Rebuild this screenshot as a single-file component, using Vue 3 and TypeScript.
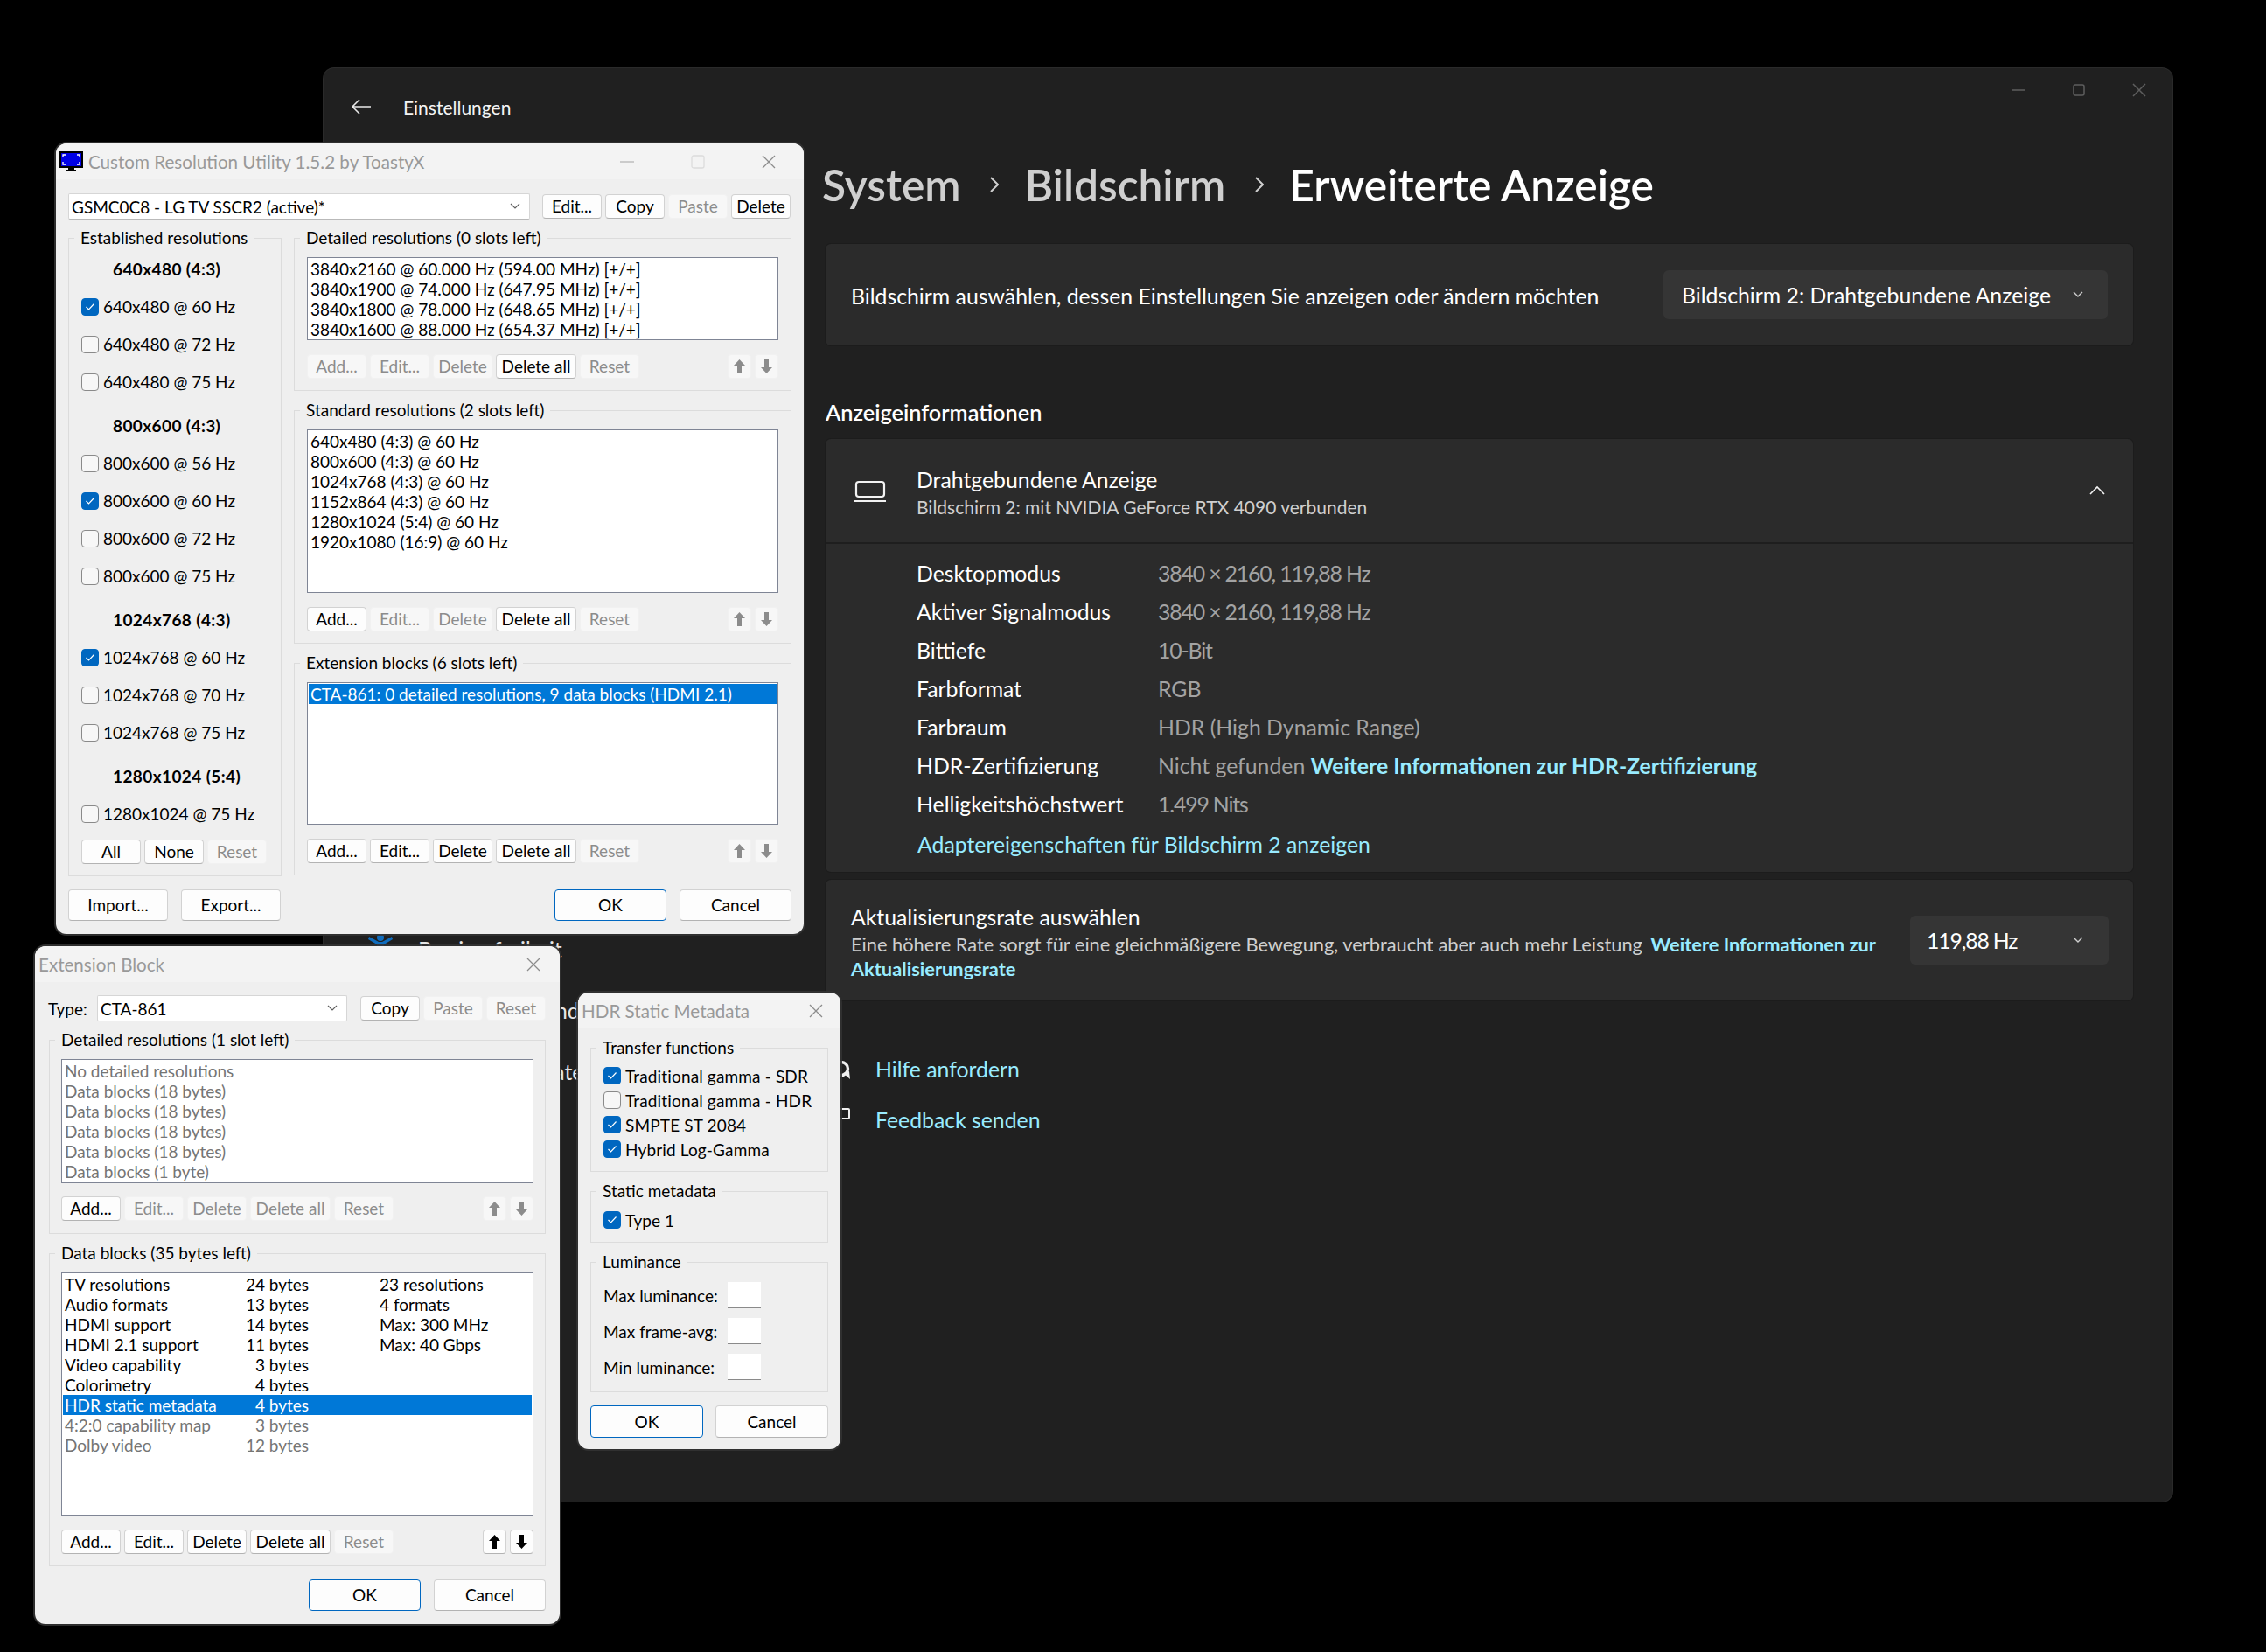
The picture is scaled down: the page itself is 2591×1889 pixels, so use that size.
<script setup lang="ts">
interface Btn { t: string; off?: boolean; wide?: boolean }

const crud = (add: boolean, edit: boolean, del: boolean, all: boolean): Btn[] => [
  { t: 'Add...', off: !add },
  { t: 'Edit...', off: !edit },
  { t: 'Delete', off: !del },
  { t: 'Delete all', off: !all, wide: true },
  { t: 'Reset', off: true },
]

const established = [
  { h: '640x480 (4:3)', items: [['640x480 @ 60 Hz', true], ['640x480 @ 72 Hz', false], ['640x480 @ 75 Hz', false]] },
  { h: '800x600 (4:3)', items: [['800x600 @ 56 Hz', false], ['800x600 @ 60 Hz', true], ['800x600 @ 72 Hz', false], ['800x600 @ 75 Hz', false]] },
  { h: '1024x768 (4:3)', items: [['1024x768 @ 60 Hz', true], ['1024x768 @ 70 Hz', false], ['1024x768 @ 75 Hz', false]] },
  { h: '1280x1024 (5:4)', items: [['1280x1024 @ 75 Hz', false]] },
] as { h: string; items: [string, boolean][] }[]

const cruGroups = [
  {
    legend: 'Detailed resolutions (0 slots left)', cls: 'h95', sel: false,
    lines: ['3840x2160 @ 60.000 Hz (594.00 MHz) [+/+]', '3840x1900 @ 74.000 Hz (647.95 MHz) [+/+]', '3840x1800 @ 78.000 Hz (648.65 MHz) [+/+]', '3840x1600 @ 88.000 Hz (654.37 MHz) [+/+]'],
    btns: crud(false, false, false, true),
  },
  {
    legend: 'Standard resolutions (2 slots left)', cls: 'h187', sel: false,
    lines: ['640x480 (4:3) @ 60 Hz', '800x600 (4:3) @ 60 Hz', '1024x768 (4:3) @ 60 Hz', '1152x864 (4:3) @ 60 Hz', '1280x1024 (5:4) @ 60 Hz', '1920x1080 (16:9) @ 60 Hz'],
    btns: crud(true, false, false, true),
  },
  {
    legend: 'Extension blocks (6 slots left)', cls: 'h163', sel: true,
    lines: ['CTA-861: 0 detailed resolutions, 9 data blocks (HDMI 2.1)'],
    btns: crud(true, true, true, true),
  },
]

const detailLines = ['No detailed resolutions', 'Data blocks (18 bytes)', 'Data blocks (18 bytes)', 'Data blocks (18 bytes)', 'Data blocks (18 bytes)', 'Data blocks (1 byte)']
const dataBlocks = [
  ['TV resolutions', '24 bytes', '23 resolutions', ''],
  ['Audio formats', '13 bytes', '4 formats', ''],
  ['HDMI support', '14 bytes', 'Max: 300 MHz', ''],
  ['HDMI 2.1 support', '11 bytes', 'Max: 40 Gbps', ''],
  ['Video capability', '3 bytes', '', ''],
  ['Colorimetry', '4 bytes', '', ''],
  ['HDR static metadata', '4 bytes', '', 'sel'],
  ['4:2:0 capability map', '3 bytes', '', 'dim'],
  ['Dolby video', '12 bytes', '', 'dim'],
]
const transfer: [string, boolean][] = [['Traditional gamma - SDR', true], ['Traditional gamma - HDR', false], ['SMPTE ST 2084', true], ['Hybrid Log-Gamma', true]]
const lumi = ['Max luminance:', 'Max frame-avg:', 'Min luminance:']
const infoRows = [
  ['Desktopmodus', '3840 × 2160, 119,88 Hz', 'nums'],
  ['Aktiver Signalmodus', '3840 × 2160, 119,88 Hz', 'nums'],
  ['Bittiefe', '10-Bit', 'nums'],
  ['Farbformat', 'RGB', ''],
  ['Farbraum', 'HDR (High Dynamic Range)', ''],
]
</script>

<template>
  <div class="desk">
    <!-- Settings window -->
    <section class="settings">
      <div class="caption-btns">
        <svg width="20" height="20" viewBox="0 0 20 20"><path d="M3 10h14" stroke="#5e5e5e" stroke-width="1.5" /></svg>
        <svg width="20" height="20" viewBox="0 0 20 20"><rect x="4" y="4" width="12" height="12" rx="2" fill="none" stroke="#5e5e5e" stroke-width="1.5" /></svg>
        <svg width="20" height="20" viewBox="0 0 20 20"><path d="M3 3l14 14M17 3L3 17" stroke="#5e5e5e" stroke-width="1.5" /></svg>
      </div>
      <header class="s-title">
        <svg class="back" width="24" height="24" viewBox="0 0 24 24"><path d="M23 12H2M10 4l-8 8 8 8" fill="none" stroke="#e8e8e8" stroke-width="1.6" /></svg>
        <span>Einstellungen</span>
      </header>
      <div class="s-body">
        <nav class="s-side">
          <div class="nav-item">
            <svg class="nav-ic" width="32" height="34" viewBox="0 0 32 34"><circle cx="16" cy="4" r="4" fill="#0f6cbd" /><path d="M2 6l10 6v8l-4 12h4l4-10 4 10h4l-4-12v-8l10-6-1-3-11 6h-4L3 3z" fill="#0f6cbd" /></svg>
            <span>Barrierefreiheit</span>
          </div>
          <div class="nav-item"><span class="nav-ic" /><span>Datenschutz und Sicherheit</span></div>
          <div class="nav-item"><span class="nav-ic" /><span>Windows Update</span></div>
        </nav>
        <main class="s-main">
          <h1 class="crumbs">
            <span class="c-dim">System</span>
            <svg width="14" height="24" viewBox="0 0 14 24"><path d="M5 4l8 8-8 8" fill="none" stroke="#cfcfcf" stroke-width="2" /></svg>
            <span class="c-dim">Bildschirm</span>
            <svg width="14" height="24" viewBox="0 0 14 24"><path d="M5 4l8 8-8 8" fill="none" stroke="#cfcfcf" stroke-width="2" /></svg>
            <span>Erweiterte Anzeige</span>
          </h1>

          <div class="card pick">
            <span class="pick-t">Bildschirm auswählen, dessen Einstellungen Sie anzeigen oder ändern möchten</span>
            <div class="dd dd-wide">
              <span>Bildschirm 2: Drahtgebundene Anzeige</span>
              <svg width="14" height="10" viewBox="0 0 14 10"><path d="M2 2l5 5 5-5" fill="none" stroke="#cfcfcf" stroke-width="1.4" /></svg>
            </div>
          </div>

          <h2 class="sect">Anzeigeinformationen</h2>

          <div class="card info">
            <div class="info-head">
              <svg class="lap" width="36" height="26" viewBox="0 0 36 26"><rect x="2" y="3" width="32" height="17" rx="3" fill="none" stroke="#f2f2f2" stroke-width="2.2" /><path d="M0 25h36" stroke="#f2f2f2" stroke-width="2.2" /></svg>
              <div class="info-t">
                <div class="t1">Drahtgebundene Anzeige</div>
                <div class="t2">Bildschirm 2: mit NVIDIA GeForce RTX 4090 verbunden</div>
              </div>
              <svg class="up" width="20" height="12" viewBox="0 0 20 12"><path d="M2 10l8-8 8 8" fill="none" stroke="#f2f2f2" stroke-width="1.6" /></svg>
            </div>
            <div class="info-body">
              <div v-for="r in infoRows" :key="r[0]" class="irow"><span>{{ r[0] }}</span><span class="val" :class="r[2]">{{ r[1] }}</span></div>
              <div class="irow"><span>HDR-Zertifizierung</span><span class="val">Nicht gefunden <a class="lnk b">Weitere Informationen zur HDR-Zertifizierung</a></span></div>
              <div class="irow"><span>Helligkeitshöchstwert</span><span class="val nums">1.499 Nits</span></div>
              <a class="lnk adapter">Adaptereigenschaften für Bildschirm 2 anzeigen</a>
            </div>
          </div>

          <div class="card rate">
            <div class="rate-t">
              <div class="t1">Aktualisierungsrate auswählen</div>
              <div class="t2 wrap">Eine höhere Rate sorgt für eine gleichmäßigere Bewegung, verbraucht aber auch mehr Leistung <a class="lnk b gap">Weitere Informationen zur</a><br /><a class="lnk b">Aktualisierungsrate</a></div>
            </div>
            <div class="dd dd-narrow">
              <span class="nums">119,88 Hz</span>
              <svg width="14" height="10" viewBox="0 0 14 10"><path d="M2 2l5 5 5-5" fill="none" stroke="#cfcfcf" stroke-width="1.4" /></svg>
            </div>
          </div>

          <div class="help">
            <div class="help-row">
              <svg class="help-ic" width="28" height="28" viewBox="0 0 28 28"><circle cx="18" cy="13" r="7.5" fill="none" stroke="#f0f0f0" stroke-width="3.4" /><path d="M20 18l8 7-1-9z" fill="#f0f0f0" /></svg>
              <a class="lnk">Hilfe anfordern</a>
            </div>
            <div class="help-row">
              <svg class="help-ic feedback" width="28" height="28" viewBox="0 0 28 28"><rect x="9" y="1" width="18" height="11" rx="1" fill="none" stroke="#f0f0f0" stroke-width="2" /></svg>
              <a class="lnk">Feedback senden</a>
            </div>
          </div>
        </main>
      </div>
    </section>

    <!-- CRU main window -->
    <section class="win cru">
      <header class="w-title">
        <svg class="cru-ic" width="27" height="23" viewBox="0 0 27 23">
          <rect x="0" y="0" width="27" height="19" fill="#000" />
          <rect x="2" y="2" width="23" height="15" fill="#0000e6" />
          <path d="M4 7V4h3M20 4h3v3M4 12v3h3M20 15h3v-3" fill="none" stroke="#fff" stroke-width="1.3" />
          <rect x="10" y="19" width="7" height="2" fill="#000" /><rect x="8" y="21" width="11" height="2" fill="#000" />
        </svg>
        <span class="w-name">Custom Resolution Utility 1.5.2 by ToastyX</span>
        <div class="w-ctl cru-ctl">
          <svg width="16" height="16" viewBox="0 0 16 16"><path d="M0 8h16" stroke="#b5b5b5" stroke-width="1.3" /></svg>
          <svg width="16" height="16" viewBox="0 0 16 16"><rect x="1" y="1" width="14" height="14" rx="2" fill="none" stroke="#dcdcdc" stroke-width="1.3" /></svg>
          <svg width="16" height="16" viewBox="0 0 16 16"><path d="M1 1l14 14M15 1L1 15" stroke="#8c8c8c" stroke-width="1.3" /></svg>
        </div>
      </header>
      <div class="w-body">
        <div class="toprow">
          <div class="combo cru-combo">
            <span>GSMC0C8 - LG TV SSCR2 (active)*</span>
            <svg width="12" height="8" viewBox="0 0 12 8"><path d="M1 1l5 5 5-5" fill="none" stroke="#606060" stroke-width="1.2" /></svg>
          </div>
          <button class="btn">Edit...</button>
          <button class="btn">Copy</button>
          <button class="btn off">Paste</button>
          <button class="btn">Delete</button>
        </div>
        <div class="cru-grid">
          <fieldset class="grp est">
            <legend>Established resolutions</legend>
            <template v-for="g in established" :key="g.h">
              <div class="est-h">{{ g.h }}</div>
              <label v-for="it in g.items" :key="it[0]" class="chk tall">
                <span class="box" :class="{ on: it[1] }"><svg v-if="it[1]" width="12" height="10" viewBox="0 0 12 10"><path d="M1.5 5l3 3 6-6.5" fill="none" stroke="#fff" stroke-width="1.2" /></svg></span>
                <span>{{ it[0] }}</span>
              </label>
            </template>
            <div class="est-btns">
              <button class="btn">All</button>
              <button class="btn">None</button>
              <button class="btn off">Reset</button>
            </div>
          </fieldset>
          <div class="cru-right">
            <fieldset v-for="g in cruGroups" :key="g.legend" class="grp">
              <legend>{{ g.legend }}</legend>
              <div class="list" :class="g.cls">
                <div v-for="l in g.lines" :key="l" class="li" :class="{ sel: g.sel }">{{ l }}</div>
              </div>
              <div class="btnrow m16">
                <button v-for="b in g.btns" :key="b.t" class="btn" :class="{ off: b.off, wide: b.wide }">{{ b.t }}</button>
                <span class="fill" />
                <button class="btn arrow off"><svg width="13" height="16" viewBox="0 0 13 16"><path d="M6.5 0L13 7H9v9H4V7H0z" fill="#8c8c8c" /></svg></button>
                <button class="btn arrow off"><svg width="13" height="16" viewBox="0 0 13 16"><path d="M6.5 16L13 9H9V0H4v9H0z" fill="#8c8c8c" /></svg></button>
              </div>
            </fieldset>
          </div>
        </div>
        <div class="foot">
          <button class="btn big imp">Import...</button>
          <button class="btn big imp">Export...</button>
          <span class="fill" />
          <button class="btn big prim">OK</button>
          <button class="btn big">Cancel</button>
        </div>
      </div>
    </section>

    <!-- Extension Block -->
    <section class="win ext">
      <header class="w-title">
        <span class="w-name ext-name">Extension Block</span>
        <div class="w-ctl">
          <svg width="16" height="16" viewBox="0 0 16 16"><path d="M1 1l14 14M15 1L1 15" stroke="#8c8c8c" stroke-width="1.3" /></svg>
        </div>
      </header>
      <div class="w-body ext-body">
        <div class="toprow ext-top">
          <span class="type-l">Type:</span>
          <div class="combo ext-combo">
            <span>CTA-861</span>
            <svg width="12" height="8" viewBox="0 0 12 8"><path d="M1 1l5 5 5-5" fill="none" stroke="#606060" stroke-width="1.2" /></svg>
          </div>
          <button class="btn copy-gap">Copy</button>
          <button class="btn off">Paste</button>
          <button class="btn off">Reset</button>
        </div>
        <fieldset class="grp tight">
          <legend>Detailed resolutions (1 slot left)</legend>
          <div class="list h142">
            <div v-for="(l, i) in detailLines" :key="i" class="li dim">{{ l }}</div>
          </div>
          <div class="btnrow">
            <button v-for="b in crud(true, false, false, false)" :key="b.t" class="btn" :class="{ off: b.off, wide: b.wide }">{{ b.t }}</button>
            <span class="fill" />
            <button class="btn arrow off"><svg width="13" height="16" viewBox="0 0 13 16"><path d="M6.5 0L13 7H9v9H4V7H0z" fill="#8c8c8c" /></svg></button>
            <button class="btn arrow off"><svg width="13" height="16" viewBox="0 0 13 16"><path d="M6.5 16L13 9H9V0H4v9H0z" fill="#8c8c8c" /></svg></button>
          </div>
        </fieldset>
        <fieldset class="grp tight last">
          <legend>Data blocks (35 bytes left)</legend>
          <div class="list h278">
            <div v-for="r in dataBlocks" :key="r[0]" class="li cols" :class="r[3]">
              <span>{{ r[0] }}</span><span class="bytes">{{ r[1] }}</span><span class="third">{{ r[2] }}</span>
            </div>
          </div>
          <div class="btnrow m16">
            <button v-for="b in crud(true, true, true, true)" :key="b.t" class="btn" :class="{ off: b.off, wide: b.wide }">{{ b.t }}</button>
            <span class="fill" />
            <button class="btn arrow"><svg width="13" height="16" viewBox="0 0 13 16"><path d="M6.5 0L13 7H9v9H4V7H0z" fill="#000" /></svg></button>
            <button class="btn arrow"><svg width="13" height="16" viewBox="0 0 13 16"><path d="M6.5 16L13 9H9V0H4v9H0z" fill="#000" /></svg></button>
          </div>
        </fieldset>
        <div class="foot">
          <span class="fill" />
          <button class="btn big prim">OK</button>
          <button class="btn big">Cancel</button>
        </div>
      </div>
    </section>

    <!-- HDR Static Metadata -->
    <section class="win hdr">
      <header class="w-title">
        <span class="w-name">HDR Static Metadata</span>
        <div class="w-ctl hdr-ctl">
          <svg width="16" height="16" viewBox="0 0 16 16"><path d="M1 1l14 14M15 1L1 15" stroke="#8c8c8c" stroke-width="1.3" /></svg>
        </div>
      </header>
      <div class="w-body hdr-body">
        <fieldset class="grp small">
          <legend>Transfer functions</legend>
          <label v-for="t in transfer" :key="t[0]" class="chk">
            <span class="box" :class="{ on: t[1] }"><svg v-if="t[1]" width="12" height="10" viewBox="0 0 12 10"><path d="M1.5 5l3 3 6-6.5" fill="none" stroke="#fff" stroke-width="1.2" /></svg></span>
            <span class="spread">{{ t[0] }}</span>
          </label>
        </fieldset>
        <fieldset class="grp small pad7">
          <legend>Static metadata</legend>
          <label class="chk">
            <span class="box on"><svg width="12" height="10" viewBox="0 0 12 10"><path d="M1.5 5l3 3 6-6.5" fill="none" stroke="#fff" stroke-width="1.2" /></svg></span>
            <span>Type 1</span>
          </label>
        </fieldset>
        <fieldset class="grp small lum">
          <legend>Luminance</legend>
          <div v-for="l in lumi" :key="l" class="lum-row"><span>{{ l }}</span><div class="num" /></div>
        </fieldset>
        <div class="foot hdr-foot">
          <button class="btn big prim">OK</button>
          <button class="btn big">Cancel</button>
        </div>
      </div>
    </section>
  </div>
</template>

<style>
html, body { margin: 0; background: #000; }
</style>

<style scoped>
.desk {
  position: relative;
  width: 2591px;
  height: 1889px;
  background: #000;
  overflow: hidden;
  font-family: Lato, "Open Sans", sans-serif;
}

/* ---------- Settings ---------- */
.settings {
  position: absolute;
  left: 370px;
  top: 78px;
  width: 2114px;
  height: 1639px;
  background: #202020;
  border-radius: 12px;
  box-shadow: 0 0 0 1px #2a2a2a;
  color: #fff;
  font-size: 24.8px;
  display: flex;
  flex-direction: column;
}
.caption-btns {
  position: absolute;
  top: 15px;
  right: 28px;
  display: flex;
  gap: 49px;
}
.s-title {
  height: 88px;
  flex: none;
  display: flex;
  align-items: center;
  padding-left: 31px;
  gap: 36px;
  font-size: 21px;
  color: #f4f4f4;
}
.back { flex: none; }
.s-body { display: grid; grid-template-columns: 574px 1495px; flex: 1; }
.s-side { padding-top: 884px; }
.nav-item { height: 70px; display: flex; align-items: center; gap: 27px; padding-left: 49px; color: #e6e6e6; }
.nav-ic { width: 32px; flex: none; }
.s-main { display: flex; flex-direction: column; }
.crumbs {
  margin: 12px 0 0 -4px;
  height: 66px;
  display: flex;
  align-items: center;
  gap: 29.5px;
  font-size: 49.7px;
  font-weight: 600;
  color: #fff;
}
.c-dim { color: #cfcfcf; }
.card { background: #2b2b2b; border-radius: 6px; box-shadow: 0 0 0 1px #1c1c1c; }
.pick {
  margin-top: 35px;
  height: 116px;
  display: flex;
  align-items: center;
  justify-content: space-between;
  padding: 0 29px;
}
.pick-t { padding-top: 3px; }
.dd {
  display: flex;
  align-items: center;
  justify-content: space-between;
  height: 56px;
  background: #353535;
  border-radius: 6px;
  box-sizing: border-box;
}
.dd-wide { width: 508px; padding: 0 27px 0 21px; }
.dd-narrow { width: 227px; padding: 0 28px 0 19px; }
.nums { letter-spacing: -1.15px; }
.sect { margin: 59px 0 0; font-size: 25.3px; line-height: 34px; font-weight: 600; }
.info { margin-top: 14px; height: 495px; }
.info-head {
  height: 118px;
  display: flex;
  align-items: center;
  padding: 0 31px 0 33px;
  border-bottom: 2px solid #1e1e1e;
}
.lap { flex: none; margin-right: 35px; }
.info-t { flex: 1; padding-top: 3px; }
.t1 { font-size: 24.8px; line-height: 34px; }
.t2 { font-size: 21px; line-height: 28px; color: #cfcfcf; }
.info-body { padding: 12px 0 0 104px; }
.irow { display: grid; grid-template-columns: 276px 1fr; line-height: 44px; height: 44px; }
.val { color: #a3a3a3; }
.lnk { color: #99ebff; }
.b { font-weight: 700; }
.gap { margin-left: 4px; }
.adapter { display: block; margin-top: 2px; line-height: 44px; padding-left: 1px; }
.rate {
  margin-top: 9px;
  height: 138px;
  display: flex;
  align-items: center;
  padding: 0 28px 0 29px;
  justify-content: space-between;
}
.rate-t { padding-top: 4px; }
.wrap { white-space: nowrap; font-size: 21.8px; }
.help { margin-top: 62px; display: flex; flex-direction: column; gap: 24px; }
.help-row { display: flex; align-items: center; gap: 29px; line-height: 34px; }
.help-ic { flex: none; }

/* ---------- Classic dialogs ---------- */
.win {
  position: absolute;
  background: #efefef;
  border-radius: 12px;
  box-shadow: 0 0 0 2px rgba(50, 50, 50, .9);
  color: #000;
  font-size: 19px;
  box-sizing: border-box;
}
.cru { left: 64px; top: 164px; width: 855px; height: 904px; }
.ext { left: 40px; top: 1082px; width: 600px; height: 775px; }
.hdr { left: 661px; top: 1135px; width: 300px; height: 522px; }
.w-title {
  height: 41px;
  background: #f3f3f3;
  border-radius: 12px 12px 0 0;
  display: flex;
  align-items: center;
  padding-left: 4px;
  color: #999;
  font-size: 20.6px;
}
.cru-ic { margin-right: 6px; flex: none; }
.w-name { white-space: nowrap; }
.w-ctl { margin-left: auto; margin-right: 22px; display: flex; }
.hdr-ctl { margin-right: 20px; }
.cru-ctl { gap: 65px; margin-right: 32px; }
.w-body { padding: 16px 14px 15px; }
.ext-body { padding: 15px 16px 14px; }
.hdr-body { padding: 10px 14px 13px; }
.toprow { display: flex; gap: 4px; height: 30px; align-items: center; }
.combo {
  display: flex;
  align-items: center;
  justify-content: space-between;
  height: 30px;
  box-sizing: border-box;
  background: #fff;
  border: 1px solid #d6d6d6;
  border-bottom-color: #b9b9b9;
  border-radius: 2px;
  padding: 0 10px 0 3px;
  white-space: nowrap;
}
.cru-combo { width: 528px; margin-right: 10px; }
.ext-combo { width: 286px; }
.type-l { width: 52px; margin-left: -1px; flex: none; }
.copy-gap { margin-left: 11px; }

.btn {
  width: 68px;
  height: 28px;
  padding: 0;
  flex: none;
  box-sizing: border-box;
  font: inherit;
  line-height: 24px;
  color: #000;
  background: #fdfdfd;
  border: 1px solid #d2d2d2;
  border-bottom-color: #b3b3b3;
  border-radius: 4px;
  white-space: nowrap;
}
.btn.off { background: #f7f7f7; border-color: #f1f1f1; color: #8c8c8c; }
.btn.wide { width: 92px; }
.btn.arrow { width: 27px; display: flex; align-items: center; justify-content: center; }
.btn.big { width: 128px; height: 36px; }
.btn.imp { width: 114px; }
.btn.prim { border: 1px solid #0067c0; }

.grp {
  margin: 0;
  min-width: 0;
  padding: 10px 14px 13px;
  border: 1px solid #dcdcdc;
  box-sizing: border-box;
}
.grp legend { padding: 0 7px; margin-left: -8px; line-height: 24px; white-space: nowrap; }
.tight { padding: 10px 13px 14px; margin-top: 10px; }
.tight.last { padding-bottom: 13px; }
.tight legend { margin-left: -7px; }
.ext-top + .tight { margin-top: 9px; }
.cru-grid { display: grid; grid-template-columns: 244px 569px; column-gap: 14px; margin-top: 9px; }
.cru-right { display: flex; flex-direction: column; gap: 10px; }
.est { padding: 3px 14px 13px; }
.est-h { height: 42px; line-height: 42px; padding-left: 36px; font-weight: 700; letter-spacing: .4px; white-space: nowrap; }
.est-h ~ .est-h { margin-top: 8px; }
.chk { display: flex; align-items: center; gap: 5px; height: 28px; white-space: nowrap; }
.chk.tall { height: 43px; }
.spread { letter-spacing: .15px; }
.box {
  width: 20px;
  height: 20px;
  flex: none;
  box-sizing: border-box;
  border: 1px solid #8a8a8a;
  border-radius: 4px;
  background: #f7f7f7;
  display: flex;
  align-items: center;
  justify-content: center;
}
.box.on { background: #0067c0; border-color: #0067c0; }
.est-btns { display: flex; gap: 4px; margin-top: 8px; }
.btnrow { display: flex; gap: 4px; margin-top: 15px; }
.btnrow.m16 { margin-top: 16px; }
.fill { flex: 1; }
.list {
  box-sizing: border-box;
  border: 1px solid #7f8595;
  background: #fff;
  padding: 1px;
  overflow: hidden;
}
.h95 { height: 95px; }
.h187 { height: 187px; }
.h163 { height: 163px; }
.h142 { height: 142px; }
.h278 { height: 278px; }
.li { height: 23px; line-height: 23px; padding-left: 2px; white-space: nowrap; }
.li.sel { background: #0078d7; color: #fff; }
.li.dim { color: #757575; }
.cols { display: grid; grid-template-columns: 200px 79px 1fr; }
.bytes { text-align: right; }
.third { padding-left: 81px; }
.foot { display: flex; gap: 15px; margin-top: 15px; }
.hdr-foot { justify-content: space-between; gap: 14px; }
.hdr-foot .btn.big { width: 129px; height: 37px; }
.small { padding: 6px 14px 11px; }
.small + .small { margin-top: 10px; }
.pad7 { padding-top: 7px; }
.lum { padding: 11px 14px 13px; display: flex; flex-direction: column; gap: 11px; }
.lum-row { display: grid; grid-template-columns: 142px 38px; align-items: center; height: 30px; white-space: nowrap; }
.num { height: 30px; box-sizing: border-box; background: #fff; border-bottom: 1px solid #8a8a8a; }
</style>
